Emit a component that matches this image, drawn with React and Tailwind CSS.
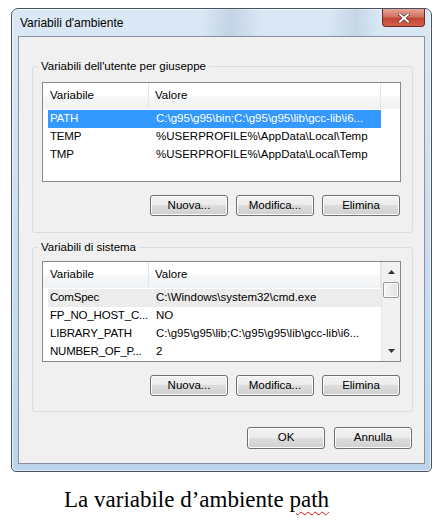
import React from "react";

const btn =
  "w-[78px] h-[21px] flex items-center justify-center rounded-[3px] border border-[#707070] bg-[linear-gradient(to_bottom,#f2f2f2_0%,#ebebeb_50%,#dddddd_50%,#cfcfcf_100%)] shadow-[inset_0_0_0_1px_#fbfbfb] text-black";

function Buttons() {
  return (
    <div className="w-[359px] flex justify-end gap-[8px] pr-[1px]">
      <div className={btn}>Nuova...</div>
      <div className={btn}>Modifica...</div>
      <div className={btn}>Elimina</div>
    </div>
  );
}

function Header({ scroll }) {
  return (
    <div className="flex h-[26px] bg-[linear-gradient(to_bottom,#ffffff_45%,#f5f6f7_55%,#f1f2f3_100%)]">
      <div className="w-[106px] pl-[7px] flex items-center border-r border-[#e3e5e8]">Variabile</div>
      <div className="w-[232px] pl-[6px] flex items-center border-r border-[#e3e5e8]">Valore</div>
      {!scroll && <div className="flex-1" />}
    </div>
  );
}

function Row({ name, value, variant }) {
  const bg =
    variant === "sel" ? "bg-[#3399ff] text-white" : variant === "hover" ? "bg-[#ececec]" : "";
  return (
    <div className={`ml-[5px] w-[333px] h-[18px] flex items-center ${bg}`}>
      <div className="w-[101px] shrink-0 pl-[2px] whitespace-nowrap tracking-[-0.2px]">{name}</div>
      <div className="pl-[7px] whitespace-nowrap">{value}</div>
    </div>
  );
}

function Group({ title, children, height, top }) {
  return (
    <div
      className="relative ml-[13px] w-[381px] border border-[#d5dfe5] rounded-[3px]"
      style={{ height, marginTop: top }}
    >
      <div className="absolute -top-[8px] left-[5px] px-[3px] bg-[#f0f0f0] leading-[14px]">{title}</div>
      {children}
    </div>
  );
}

export default function App() {
  return (
    <div className="w-[440px] h-[523px] bg-white overflow-hidden font-['Segoe_UI','Liberation_Sans',sans-serif] text-[11.5px] text-black">
      <div className="pt-[8px] pl-[11px]">
        <div className="w-[421px] h-[464px] border border-[#46525e] rounded-t-[7px] rounded-b-[5px] bg-[linear-gradient(to_bottom,#dbe8f5_0%,#cde0f1_40%,#bcd5ec_100%)] shadow-[inset_0_0_0_1px_rgba(255,255,255,0.65)] flex flex-col">
          <div className="h-[27px] flex justify-between items-start bg-[linear-gradient(to_right,transparent_45%,rgba(150,175,200,0.35)_52%,transparent_60%,transparent_75%,rgba(150,175,200,0.3)_82%,transparent_88%)]">
            <div className="pl-[8px] pt-[7px] text-[12px] leading-[15px] text-black">Variabili d'ambiente</div>
            <div className="mr-[6px] w-[43px] h-[18px] rounded-b-[4px] border border-t-0 border-[#6e2a24] bg-[linear-gradient(to_bottom,#e6a597_0%,#d27463_45%,#c24531_55%,#d5624c_100%)] flex items-center justify-center">
              <svg width="12" height="10" viewBox="0 0 12 10">
                <path d="M2 1.5 L10 8.5 M10 1.5 L2 8.5" stroke="#5a2a24" strokeWidth="3.2" strokeLinecap="square" />
                <path d="M2 1.5 L10 8.5 M10 1.5 L2 8.5" stroke="#ffffff" strokeWidth="2" strokeLinecap="square" />
              </svg>
            </div>
          </div>
          <div className="ml-[6px] w-[407px] h-[428px] border border-[#8793a0] bg-[#f0f0f0] flex flex-col">
            <Group title="Variabili dell'utente per giuseppe" height={167} top={29}>
              <div className="ml-[9px] mt-[15px] w-[359px] h-[100px] border border-[#828790] bg-white">
                <Header />
                <div className="mt-[1px]">
                  <Row name="PATH" value="C:\g95\g95\bin;C:\g95\g95\lib\gcc-lib\i6..." variant="sel" />
                  <Row name="TEMP" value="%USERPROFILE%\AppData\Local\Temp" />
                  <Row name="TMP" value="%USERPROFILE%\AppData\Local\Temp" />
                </div>
              </div>
              <div className="ml-[9px] mt-[13px]">
                <Buttons />
              </div>
            </Group>
            <Group title="Variabili di sistema" height={165} top={14}>
              <div className="ml-[9px] mt-[13px] w-[359px] h-[101px] border border-[#828790] bg-white flex">
                <div className="w-[338px]">
                  <Header scroll />
                  <div className="mt-[1px]">
                    <Row name="ComSpec" value="C:\Windows\system32\cmd.exe" variant="hover" />
                    <Row name="FP_NO_HOST_C..." value="NO" />
                    <Row name="LIBRARY_PATH" value="C:\g95\g95\lib;C:\g95\g95\lib\gcc-lib\i6..." />
                    <Row name="NUMBER_OF_P..." value="2" />
                  </div>
                </div>
                <div className="flex-1 bg-[#f1f1f1] border-l border-[#e6e6e6] flex flex-col items-center">
                  <svg className="mt-[8px]" width="7" height="4" viewBox="0 0 7 4">
                    <path d="M3.5 0 L7 4 L0 4 Z" fill="#333" />
                  </svg>
                  <div className="mt-[8px] w-[16px] h-[16px] rounded-[2px] border border-[#9a9a9a] bg-[linear-gradient(to_right,#f4f4f4,#e2e2e2)] shadow-[inset_0_0_0_1px_#fdfdfd]" />
                  <div className="flex-1" />
                  <svg className="mb-[8px]" width="7" height="4" viewBox="0 0 7 4">
                    <path d="M0 0 L7 0 L3.5 4 Z" fill="#333" />
                  </svg>
                </div>
              </div>
              <div className="ml-[9px] mt-[13px]">
                <Buttons />
              </div>
            </Group>
            <div className="ml-[13px] mt-[15px] w-[381px] flex justify-end gap-[9px] pr-[1px]">
              <div className={`${btn} h-[22px] border-[#3c7fb1] shadow-[inset_0_0_0_1px_#a7e1f7]`}>OK</div>
              <div className={`${btn} h-[22px]`}>Annulla</div>
            </div>
          </div>
        </div>
      </div>
      <div className="mt-[15px] pl-[64px] font-['Liberation_Serif','Times_New_Roman',serif] text-[23px] leading-[26px]">
        La variabile d’ambiente{" "}
        <span className="underline decoration-wavy decoration-[#e01010] decoration-1 underline-offset-[4px]">path</span>
      </div>
    </div>
  );
}
